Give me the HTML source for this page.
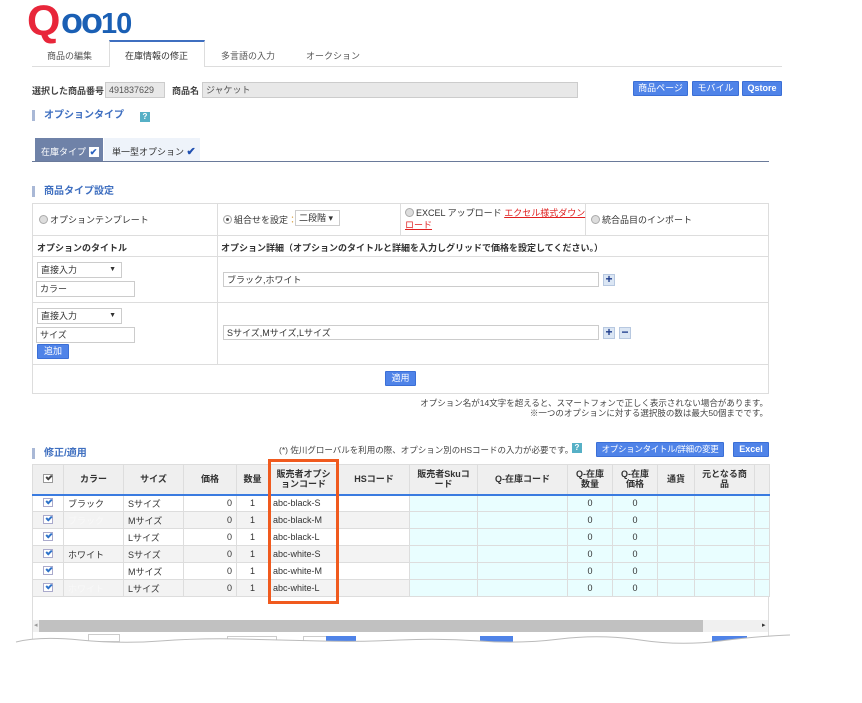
<!DOCTYPE html>
<html><head><meta charset="utf-8"><style>
*{margin:0;padding:0;box-sizing:border-box}
body{width:862px;height:703px;background:#fff;font-family:"Liberation Sans","Noto Sans CJK JP",sans-serif;font-size:9px;color:#333;position:relative;overflow:hidden}
.a{position:absolute}
.btn{position:absolute;background:#4f83e8;color:#fff;border:1px solid #3b6fd6;text-align:center;font-size:9px;line-height:13px;border-radius:1px;white-space:nowrap;overflow:hidden}
.sec{position:absolute;font-size:10px;font-weight:bold;color:#3f6fc0;padding-left:9px;border-left:3px solid #a9b8d6;line-height:11px}
.inp{position:absolute;border:1px solid #ccc;background:#fff;font-size:9px;padding-left:3px;line-height:14px}
.pb{position:absolute;width:12px;height:12px;background:#dbe6f4;border:1px solid #b7c8e0;color:#1e3c8c;font-weight:bold;font-size:12px;line-height:9px;text-align:center}
table.g{position:absolute;left:32px;top:464px;border-collapse:collapse;table-layout:fixed}
table.g td,table.g th{border:1px solid #ddd;height:17px;font-size:9px;padding:0 4px;white-space:nowrap;overflow:hidden}
table.g th{height:30px;background:#efefef;font-weight:bold;text-align:center;line-height:10px;white-space:normal;border-bottom:2px solid #3a7be0;color:#333}
.r{text-align:right}.c{text-align:center}
.cy{background:#e9feff}
tr.alt td{background:#f3f3f3}
tr.alt td.cy{background:#e9feff}
.ck{display:inline-block;width:10px;height:9px;border:1px solid #aac;background:#fff;position:relative}
.ck:after{content:"";position:absolute;left:2px;top:0px;width:4px;height:2px;border-left:2px solid #2f73c9;border-bottom:2px solid #2f73c9;transform:rotate(-45deg)}
.ck.g:after{border-color:#444}
.rad{display:inline-block;width:9px;height:9px;border-radius:50%;border:1px solid #aaa;background:#ddd;vertical-align:-1px;margin-right:2px}
</style></head><body>
<!-- logo -->
<div class="a" style="left:27px;top:-1px;font-size:43px;font-weight:bold;color:#e8263a;line-height:44px">Q</div>
<div class="a" style="left:61px;top:3px;height:36px;font-size:29px;font-weight:bold;color:#1a5fb4;letter-spacing:-1px;line-height:36px;white-space:nowrap"><span style="font-size:36px;letter-spacing:-2px">oo</span>10</div>
<!-- tabs -->
<div class="a" style="left:32px;top:66px;width:750px;height:1px;background:#ddd"></div>
<div class="a" style="left:47px;top:49px;color:#555">商品の編集</div>
<div class="a" style="left:109px;top:40px;width:96px;height:27px;border-top:2px solid #3f6fc0;border-left:1px solid #ddd;border-right:1px solid #ddd;background:#fff"></div>
<div class="a" style="left:125px;top:49px;color:#333">在庫情報の修正</div>
<div class="a" style="left:221px;top:49px;color:#555">多言語の入力</div>
<div class="a" style="left:306px;top:49px;color:#555">オークション</div>
<!-- product row -->
<div class="a" style="left:32px;top:84px;font-weight:bold;color:#444">選択した商品番号</div>
<div class="inp" style="left:105px;top:82px;width:60px;height:16px;background:#e8e8e8;color:#555">491837629</div>
<div class="a" style="left:172px;top:84px;font-weight:bold;color:#444">商品名</div>
<div class="inp" style="left:202px;top:82px;width:376px;height:16px;background:#e8e8e8;color:#555">ジャケット</div>
<div class="btn" style="left:633px;top:81px;width:55px;height:15px">商品ページ</div>
<div class="btn" style="left:692px;top:81px;width:47px;height:15px">モバイル</div>
<div class="btn" style="left:742px;top:81px;width:40px;height:15px;font-weight:bold">Qstore</div>
<!-- option type -->
<div class="sec" style="left:32px;top:110px">オプションタイプ</div>
<div class="a" style="left:140px;top:112px;width:10px;height:10px;background:#56b0c6;color:#fff;font-size:8px;text-align:center;line-height:10px;font-weight:bold">?</div>
<div class="a" style="left:35px;top:138px;width:68px;height:23px;background:#6f82a8;color:#fff;padding:7px 0 0 6px">在庫タイプ <span style="display:inline-block;width:10px;height:10px;background:#fff;color:#2a62c0;font-size:9px;line-height:10px;text-align:center;font-weight:bold">✔</span></div>
<div class="a" style="left:104px;top:138px;width:96px;height:23px;background:#eef3fa;color:#333;padding:7px 0 0 8px">単一型オプション <span style="color:#1f4fb0;font-weight:bold;font-size:11px">✔</span></div>
<div class="a" style="left:32px;top:161px;width:737px;height:1px;background:#6a7a9a"></div>
<!-- product type setting -->
<div class="sec" style="left:32px;top:186px">商品タイプ設定</div>
<div class="a" style="left:32px;top:203px;width:737px;height:191px;border:1px solid #ddd"></div>
<div class="a" style="left:32px;top:235px;width:737px;height:1px;background:#ddd"></div>
<div class="a" style="left:217px;top:203px;width:1px;height:32px;background:#ddd"></div>
<div class="a" style="left:400px;top:203px;width:1px;height:32px;background:#ddd"></div>
<div class="a" style="left:585px;top:203px;width:1px;height:32px;background:#ddd"></div>
<div class="a" style="left:39px;top:213px"><span class="rad"></span>オプションテンプレート</div>
<div class="a" style="left:223px;top:213px"><span class="rad" style="background:#fff;box-shadow:inset 0 0 0 2px #fff,inset 0 0 0 4px #555"></span>組合せを設定<span style="color:#d8a040">：</span></div>
<div class="inp" style="left:295px;top:210px;width:45px;height:16px;line-height:14px">二段階 ▾</div>
<div class="a" style="left:405px;top:207px;line-height:12px"><span class="rad"></span>EXCEL アップロード <span style="color:#e02020;text-decoration:underline">エクセル様式ダウン<br>ロード</span></div>
<div class="a" style="left:591px;top:213px"><span class="rad"></span>統合品目のインポート</div>
<div class="a" style="left:32px;top:256px;width:737px;height:1px;background:#ddd"></div>
<div class="a" style="left:32px;top:302px;width:737px;height:1px;background:#ddd"></div>
<div class="a" style="left:32px;top:364px;width:737px;height:1px;background:#ddd"></div>
<div class="a" style="left:217px;top:235px;width:1px;height:129px;background:#ddd"></div>
<div class="a" style="left:37px;top:241px;font-weight:bold;color:#333">オプションのタイトル</div>
<div class="a" style="left:221px;top:241px;font-weight:bold;color:#333">オプション詳細（オプションのタイトルと詳細を入力しグリッドで価格を設定してください。）</div>
<div class="inp" style="left:37px;top:262px;width:85px;height:16px">直接入力<span style="position:absolute;right:5px;font-size:7px">▼</span></div>
<div class="inp" style="left:36px;top:281px;width:99px;height:16px">カラー</div>
<div class="inp" style="left:223px;top:272px;width:376px;height:15px">ブラック,ホワイト</div>
<div class="pb" style="left:603px;top:274px">+</div>
<div class="inp" style="left:37px;top:308px;width:85px;height:16px">直接入力<span style="position:absolute;right:5px;font-size:7px">▼</span></div>
<div class="inp" style="left:36px;top:327px;width:99px;height:16px">サイズ</div>
<div class="btn" style="left:37px;top:344px;width:32px;height:15px">追加</div>
<div class="inp" style="left:223px;top:325px;width:376px;height:15px">Sサイズ,Mサイズ,Lサイズ</div>
<div class="pb" style="left:603px;top:327px">+</div>
<div class="pb" style="left:619px;top:327px">−</div>
<div class="btn" style="left:385px;top:371px;width:31px;height:15px">適用</div>
<div class="a" style="right:94px;top:398px;text-align:right;font-size:8.5px;color:#444;line-height:10px">オプション名が14文字を超えると、スマートフォンで正しく表示されない場合があります。<br>※一つのオプションに対する選択肢の数は最大50個までです。</div>
<!-- grid section -->
<div class="sec" style="left:32px;top:448px">修正/適用</div>
<div class="a" style="left:279px;top:444px;font-size:8.5px;color:#444">(*) 佐川グローバルを利用の際、オプション別のHSコードの入力が必要です。</div>
<div class="a" style="left:572px;top:443px;width:10px;height:10px;background:#56b0c6;color:#fff;font-size:8px;text-align:center;line-height:10px;font-weight:bold">?</div>
<div class="btn" style="left:596px;top:442px;width:128px;height:15px;font-size:8.5px;letter-spacing:-0.3px">オプションタイトル/詳細の変更</div>
<div class="btn" style="left:733px;top:442px;width:36px;height:15px;font-weight:bold">Excel</div>
<div class="a" style="left:32px;top:464px;width:737px;height:168px;border:1px solid #ddd"></div>
<table class="g">
<colgroup><col style="width:31px"><col style="width:60px"><col style="width:60px"><col style="width:53px"><col style="width:32px"><col style="width:70px"><col style="width:71px"><col style="width:68px"><col style="width:90px"><col style="width:45px"><col style="width:45px"><col style="width:37px"><col style="width:60px"><col style="width:15px"></colgroup>
<tr><th><span class="ck g" style="border-color:#999"></span></th><th>カラー</th><th>サイズ</th><th>価格</th><th>数量</th><th>販売者オプションコード</th><th>HSコード</th><th>販売者Skuコード</th><th>Q-在庫コード</th><th>Q-在庫数量</th><th>Q-在庫価格</th><th>通貨</th><th>元となる商品</th><th></th></tr>
<tr><td class="c"><span class="ck"></span></td><td>ブラック</td><td>Sサイズ</td><td class="r">0</td><td class="c">1</td><td>abc-black-S</td><td></td><td class="cy"></td><td class="cy"></td><td class="cy c">0</td><td class="cy c">0</td><td class="cy"></td><td class="cy"></td><td class="cy"></td></tr>
<tr class="alt"><td class="c"><span class="ck"></span></td><td style="color:#f8f8f8">ブラック</td><td>Mサイズ</td><td class="r">0</td><td class="c">1</td><td>abc-black-M</td><td></td><td class="cy"></td><td class="cy"></td><td class="cy c">0</td><td class="cy c">0</td><td class="cy"></td><td class="cy"></td><td class="cy"></td></tr>
<tr><td class="c"><span class="ck"></span></td><td></td><td>Lサイズ</td><td class="r">0</td><td class="c">1</td><td>abc-black-L</td><td></td><td class="cy"></td><td class="cy"></td><td class="cy c">0</td><td class="cy c">0</td><td class="cy"></td><td class="cy"></td><td class="cy"></td></tr>
<tr class="alt"><td class="c"><span class="ck"></span></td><td>ホワイト</td><td>Sサイズ</td><td class="r">0</td><td class="c">1</td><td>abc-white-S</td><td></td><td class="cy"></td><td class="cy"></td><td class="cy c">0</td><td class="cy c">0</td><td class="cy"></td><td class="cy"></td><td class="cy"></td></tr>
<tr><td class="c"><span class="ck"></span></td><td></td><td>Mサイズ</td><td class="r">0</td><td class="c">1</td><td>abc-white-M</td><td></td><td class="cy"></td><td class="cy"></td><td class="cy c">0</td><td class="cy c">0</td><td class="cy"></td><td class="cy"></td><td class="cy"></td></tr>
<tr class="alt"><td class="c"><span class="ck"></span></td><td style="color:#f8f8f8">ホワイト</td><td>Lサイズ</td><td class="r">0</td><td class="c">1</td><td>abc-white-L</td><td></td><td class="cy"></td><td class="cy"></td><td class="cy c">0</td><td class="cy c">0</td><td class="cy"></td><td class="cy"></td><td class="cy"></td></tr>
</table>
<div class="a" style="left:268px;top:459px;width:71px;height:145px;border:3px solid #f05a1e"></div>
<!-- scrollbar -->
<div class="a" style="left:33px;top:620px;width:735px;height:12px;background:#f0f0f0"></div>
<div class="a" style="left:39px;top:620px;width:664px;height:12px;background:#c1c1c1"></div>
<div class="a" style="left:34px;top:621px;font-size:7px;color:#999">◂</div>
<div class="a" style="left:762px;top:621px;font-size:7px;color:#333">▸</div>
<!-- torn bottom -->
<div class="a" style="left:32px;top:632px;width:737px;height:10px;border-left:1px solid #ddd;border-right:1px solid #ddd"></div>
<div class="a" style="left:88px;top:634px;width:32px;height:8px;border:1px solid #ccc"></div>
<div class="a" style="left:227px;top:636px;width:50px;height:8px;border:1px solid #ccc"></div>
<div class="a" style="left:303px;top:636px;width:50px;height:8px;border:1px solid #ccc"></div>
<div class="a" style="left:326px;top:636px;width:30px;height:6px;background:#4f83e8"></div>
<div class="a" style="left:480px;top:636px;width:33px;height:6px;background:#4f83e8"></div>
<div class="a" style="left:712px;top:636px;width:35px;height:6px;background:#4f83e8"></div>
<svg class="a" style="left:0;top:630px" width="862" height="73"><path d="M0 14 Q40 6 80 10 T160 11 T240 9 T320 11 T400 10 T480 11 T560 9 T640 10 T720 11 T790 5 L862 5 L862 73 L0 73 Z" fill="#fff" stroke="none"/><path d="M16 12 Q40 6 80 10 T160 11 T240 9 T320 11 T400 10 T480 11 T560 9 T640 10 T720 11 T790 5" fill="none" stroke="#bbb" stroke-width="1"/></svg>
</body></html>
